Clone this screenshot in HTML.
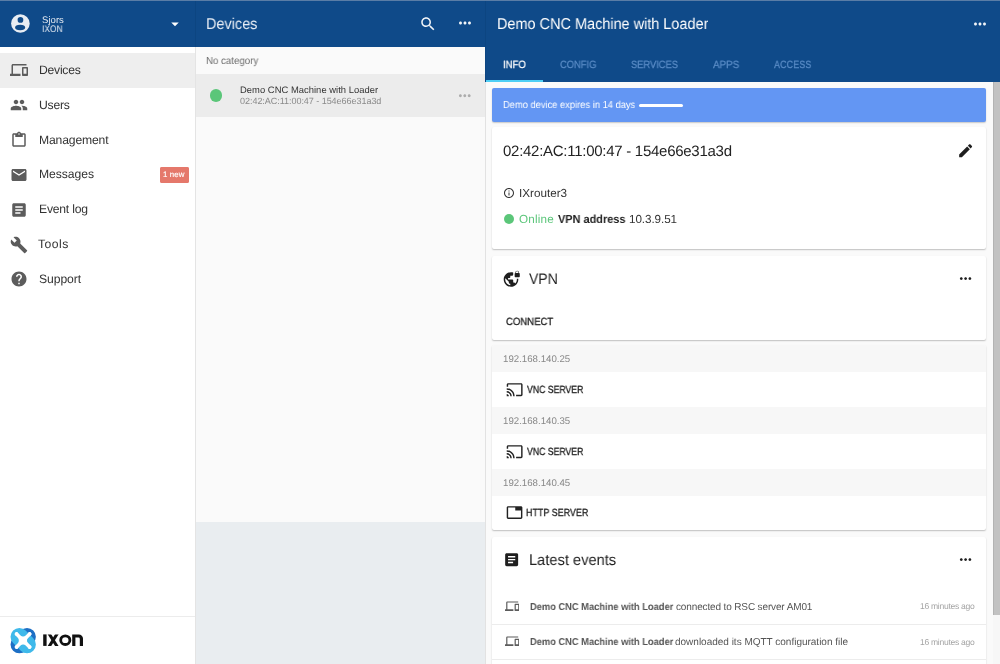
<!DOCTYPE html>
<html><head><meta charset="utf-8">
<style>
*{box-sizing:border-box;margin:0;padding:0}
html,body{width:1000px;height:664px;overflow:hidden;background:#fff;font-family:"Liberation Sans",sans-serif;color:#333}
.abs{position:absolute}
svg{display:block;position:absolute}
.t{position:absolute;white-space:nowrap;will-change:transform;text-rendering:geometricPrecision}
.card{position:absolute;left:492px;width:494px;background:#fff;box-shadow:0 1px 1.5px rgba(0,0,0,0.24);border-radius:2px}
.nv{fill:#5c5c5c}
</style></head><body>
<!-- sidebar -->
<div class="abs" style="left:0;top:0;width:195px;height:47px;background:#0f4a89"></div>
<svg style="left:11px;top:14px" width="19" height="19" viewBox="0 0 19 19">
<circle cx="9.4" cy="9.5" r="9.3" fill="#e8edf3"/>
<circle cx="9.45" cy="5.9" r="2.85" fill="#0f4a89"/>
<ellipse cx="9.1" cy="13.4" rx="5" ry="2.75" fill="#0f4a89"/>
</svg>
<svg style="left:165.75px;top:14.5px" width="18" height="18" viewBox="0 0 24 24"><path d="M7 10l5 5 5-5z" fill="#fff"/></svg>
<div class="abs" style="left:0;top:53px;width:195px;height:35px;background:#eeeeee"></div>
<svg class="nv" style="left:10px;top:61px" width="18" height="18" viewBox="0 0 24 24"><path d="M4 6h18V4H4c-1.1 0-2 .9-2 2v11H0v3h14v-3H4V6zm19 2h-6c-.55 0-1 .45-1 1v10c0 .55.45 1 1 1h6c.55 0 1-.45 1-1V9c0-.55-.45-1-1-1zm-1 9h-4v-7h4v7z"/></svg>
<svg class="nv" style="left:10px;top:96px" width="18" height="18" viewBox="0 0 24 24"><path d="M16 11c1.66 0 2.99-1.34 2.99-3S17.66 5 16 5c-1.66 0-3 1.34-3 3s1.34 3 3 3zm-8 0c1.66 0 2.99-1.34 2.99-3S9.66 5 8 5C6.34 5 5 6.34 5 8s1.34 3 3 3zm0 2c-2.33 0-7 1.17-7 3.5V19h14v-2.5c0-2.33-4.67-3.5-7-3.5zm8 0c-.29 0-.62.02-.97.05 1.16.84 1.97 1.97 1.97 3.45V19h6v-2.5c0-2.33-4.67-3.5-7-3.5z"/></svg>
<svg class="nv" style="left:10px;top:131px" width="18" height="18" viewBox="0 0 24 24"><path d="M19 3h-4.18C14.4 1.84 13.3 1 12 1c-1.3 0-2.4.84-2.82 2H5c-1.1 0-2 .9-2 2v14c0 1.1.9 2 2 2h14c1.1 0 2-.9 2-2V5c0-1.1-.9-2-2-2zm-7 0c.55 0 1 .45 1 1s-.45 1-1 1-1-.45-1-1 .45-1 1-1zm7 16H5V5h2v3h10V5h2v14z"/></svg>
<svg class="nv" style="left:10px;top:166px" width="18" height="18" viewBox="0 0 24 24"><path d="M20 4H4c-1.1 0-1.99.9-1.99 2L2 18c0 1.1.9 2 2 2h16c1.1 0 2-.9 2-2V6c0-1.1-.9-2-2-2zm0 4l-8 5-8-5V6l8 5 8-5v2z"/></svg>
<svg class="nv" style="left:10px;top:200.7px" width="18" height="18" viewBox="0 0 24 24"><path d="M19 3H5c-1.1 0-2 .9-2 2v14c0 1.1.9 2 2 2h14c1.1 0 2-.9 2-2V5c0-1.1-.9-2-2-2zm-5 14H7v-2h7v2zm3-4H7v-2h10v2zm0-4H7V7h10v2z"/></svg>
<svg class="nv" style="left:10px;top:235.5px" width="18" height="18" viewBox="0 0 24 24"><path d="M22.7 19l-9.1-9.1c.9-2.3.4-5-1.5-6.9-2-2-5-2.4-7.4-1.3L9 6 6 9 1.6 4.7C.4 7.1.9 10.1 2.9 12.1c1.9 1.9 4.6 2.4 6.9 1.5l9.1 9.1c.4.4 1 .4 1.4 0l2.3-2.3c.5-.4.5-1.1.1-1.4z"/></svg>
<svg class="nv" style="left:10px;top:270.3px" width="18" height="18" viewBox="0 0 24 24"><path d="M12 2C6.48 2 2 6.48 2 12s4.48 10 10 10 10-4.48 10-10S17.52 2 12 2zm1 17h-2v-2h2v2zm2.07-7.75l-.9.92C13.45 12.9 13 13.5 13 15h-2v-.5c0-1.1.45-2.1 1.17-2.83l1.24-1.26c.37-.36.59-.86.59-1.41 0-1.1-.9-2-2-2s-2 .9-2 2H8c0-2.21 1.79-4 4-4s4 1.79 4 4c0 .88-.36 1.68-.93 2.25z"/></svg>
<div class="abs" style="left:160px;top:167px;width:29px;height:16px;background:#e5786b;border-radius:2px"></div>
<div class="abs" style="left:0;top:616px;width:195px;height:1px;background:#ececec"></div>
<svg style="left:8px;top:626px" width="30" height="30" viewBox="0 0 30 30">
<rect x="0.95" y="5.75" width="28.5" height="17.7" rx="8.85" transform="rotate(-45 15.2 14.6)" fill="#1d6fc5"/>
<rect x="0.95" y="5.75" width="28.5" height="17.7" rx="8.85" transform="rotate(45 15.2 14.6)" fill="#3fb9ea"/>
<path fill="#fff" d="M9.86 6.58A5.43 5.43 0 0 0 20.34 6.58A1.9 1.9 0 0 1 23.02 9.26A5.43 5.43 0 0 0 23.02 19.74A1.9 1.9 0 0 1 20.34 22.42A5.46 5.46 0 0 0 9.86 22.42A1.9 1.9 0 0 1 7.18 19.74A5.6 5.6 0 0 0 7.18 9.26A1.9 1.9 0 0 1 9.86 6.58Z"/>
<path stroke="#fff" stroke-width="3.6" stroke-linecap="round" d="M8.52 7.92L21.68 21.08M21.68 7.92L8.52 21.08"/>
</svg>
<svg style="left:40px;top:630px" width="48" height="20" viewBox="0 0 48 20">
<defs><clipPath id="xc"><rect x="0" y="4.4" width="48" height="11.5"/></clipPath></defs>
<rect x="3.2" y="4.4" width="3.4" height="11.5" fill="#111"/>
<g clip-path="url(#xc)" stroke="#111" stroke-width="3"><line x1="8.9" y1="3.4" x2="17.4" y2="16.9"/><line x1="17.4" y1="3.4" x2="8.9" y2="16.9"/></g>
<ellipse cx="25.3" cy="10.15" rx="4.6" ry="4.35" fill="none" stroke="#111" stroke-width="2.8"/>
<path fill="#111" d="M32.2 15.9V4.4H38.8A4.2 4.2 0 0 1 43 8.6V15.9H39.8V8.9A1.3 1.3 0 0 0 38.5 7.6H35.4V15.9Z"/>
</svg>
<div class="abs" style="left:195px;top:47px;width:1px;height:617px;background:#e4e4e4"></div>
<!-- devices panel -->
<div class="abs" style="left:196px;top:0;width:289px;height:47px;background:#0f4a89"></div>

<svg style="left:418.5px;top:14.8px" width="18" height="18" viewBox="0 0 24 24"><path fill="#f2f5f9" d="M15.5 14h-.79l-.28-.27C15.41 12.59 16 11.11 16 9.5 16 5.91 13.09 3 9.5 3S3 5.91 3 9.5 5.91 16 9.5 16c1.61 0 3.09-.59 4.23-1.57l.27.28v.79l5 4.99L20.49 19l-4.99-5zm-6 0C7.01 14 5 11.99 5 9.5S7.01 5 9.5 5 14 7.01 14 9.5 11.99 14 9.5 14z"/></svg>
<svg style="left:456.3px;top:14.4px" width="18" height="18" viewBox="0 0 24 24"><path fill="#f2f5f9" d="M6 10c-1.1 0-2 .9-2 2s.9 2 2 2 2-.9 2-2-.9-2-2-2zm12 0c-1.1 0-2 .9-2 2s.9 2 2 2 2-.9 2-2-.9-2-2-2zm-6 0c-1.1 0-2 .9-2 2s.9 2 2 2 2-.9 2-2-.9-2-2-2z"/></svg>
<div class="abs" style="left:196px;top:47px;width:289px;height:475px;background:#fafafa"></div>
<div class="abs" style="left:196px;top:74px;width:289px;height:43px;background:#ececec"></div>
<div class="abs" style="left:210px;top:89.3px;width:12.4px;height:12.4px;border-radius:50%;background:#5bc679"></div>
<svg style="left:456.4px;top:86.6px" width="17.6" height="17.6" viewBox="0 0 24 24"><path fill="#acacac" d="M6 10c-1.1 0-2 .9-2 2s.9 2 2 2 2-.9 2-2-.9-2-2-2zm12 0c-1.1 0-2 .9-2 2s.9 2 2 2 2-.9 2-2-.9-2-2-2zm-6 0c-1.1 0-2 .9-2 2s.9 2 2 2 2-.9 2-2-.9-2-2-2z"/></svg>
<div class="abs" style="left:196px;top:522px;width:289px;height:142px;background:#e9edf0"></div>
<div class="abs" style="left:485px;top:47px;width:1px;height:617px;background:#e2e2e2"></div>
<!-- right panel -->
<div class="abs" style="left:486px;top:0;width:514px;height:82px;background:#0f4a89"></div>

<svg style="left:971px;top:14.5px" width="18" height="18" viewBox="0 0 24 24"><path fill="#f2f5f9" d="M6 10c-1.1 0-2 .9-2 2s.9 2 2 2 2-.9 2-2-.9-2-2-2zm12 0c-1.1 0-2 .9-2 2s.9 2 2 2 2-.9 2-2-.9-2-2-2zm-6 0c-1.1 0-2 .9-2 2s.9 2 2 2 2-.9 2-2-.9-2-2-2z"/></svg>
<div class="abs" style="left:486px;top:80px;width:57px;height:2px;background:#4fcff5"></div>
<div class="abs" style="left:486px;top:82px;width:507px;height:582px;background:#fafafa"></div>
<div class="abs" style="left:993px;top:82px;width:7px;height:582px;background:#f7f7f7"></div>
<div class="abs" style="left:993px;top:82px;width:7px;height:533px;background:#c2c2c2;border-left:1px solid #b3b3b3"></div>
<div class="abs" style="left:0;top:0;width:1000px;height:1px;background:#5a7da6"></div>
<div class="abs" style="left:195px;top:1px;width:1px;height:46px;background:#0c4581"></div>
<div class="abs" style="left:485px;top:1px;width:1px;height:81px;background:#0c4581"></div>
<!-- banner -->
<div class="abs" style="left:492px;top:87.5px;width:494px;height:34px;background:#6396f3;border-radius:2px;box-shadow:0 1px 1.5px rgba(0,0,0,0.2)"></div>
<div class="abs" style="left:639px;top:104px;width:44px;height:3px;background:#fff;border-radius:1.5px"></div>
<!-- card 1 -->
<div class="card" style="top:127px;height:122px"></div>
<svg style="left:956.9px;top:141.7px" width="17.3" height="17.3" viewBox="0 0 24 24"><path fill="#1e1e1e" d="M3 17.25V21h3.75L17.81 9.94l-3.75-3.75L3 17.25zM20.71 7.04c.39-.39.39-1.02 0-1.41l-2.34-2.34c-.39-.39-1.02-.39-1.41 0l-1.83 1.83 3.75 3.75 1.83-1.83z"/></svg>
<svg style="left:503px;top:187px" width="12" height="12" viewBox="0 0 24 24"><path fill="#333" d="M11 7h2v2h-2zm0 4h2v6h-2zm1-9C6.48 2 2 6.48 2 12s4.48 10 10 10 10-4.48 10-10S17.52 2 12 2zm0 18c-4.41 0-8-3.590-8-8s3.59-8 8-8 8 3.59 8 8-3.59 8-8 8z"/></svg>
<div class="abs" style="left:504px;top:214px;width:10px;height:10px;border-radius:50%;background:#5bc679"></div>
<!-- card 2 -->
<div class="card" style="top:256px;height:83.5px"></div>
<svg style="left:503.3px;top:269.5px" width="17.5" height="17.5" viewBox="0 0 24 24"><path fill="#1e1e1e" d="M22 4v-.5C22 2.12 20.88 1 19.5 1S17 2.12 17 3.5V4c-.55 0-1 .45-1 1v4c0 .55.45 1 1 1h5c.55 0 1-.45 1-1V5c0-.55-.45-1-1-1zm-.8 0h-3.4v-.5c0-.94.76-1.7 1.7-1.7s1.7.76 1.7 1.7V4zm-2.28 8c.04.33.08.66.08 1 0 2.08-.8 3.97-2.1 5.39-.26-.81-1-1.39-1.9-1.39h-1v-3c0-.55-.45-1-1-1H7v-2h2c.55 0 1-.45 1-1V8h2c1.1 0 2-.9 2-2V3.46c-.95-.3-1.95-.46-3-.46C5.48 3 1 7.48 1 13s4.48 10 10 10 10-4.48 10-10c0-.34-.02-.67-.05-1h-2.03zM10 20.93c-3.95-.49-7-3.85-7-7.93 0-.62.08-1.21.21-1.79L8 16v1c0 1.1.9 2 2 2v1.93z"/></svg>
<svg style="left:956.8px;top:269.8px" width="17.2" height="17.2" viewBox="0 0 24 24"><path fill="#1e1e1e" d="M6 10c-1.1 0-2 .9-2 2s.9 2 2 2 2-.9 2-2-.9-2-2-2zm12 0c-1.1 0-2 .9-2 2s.9 2 2 2 2-.9 2-2-.9-2-2-2zm-6 0c-1.1 0-2 .9-2 2s.9 2 2 2 2-.9 2-2-.9-2-2-2z"/></svg>
<!-- card 3 -->
<div class="card" style="top:345px;height:185px;overflow:hidden">
<div class="abs" style="left:0;top:0;width:494px;height:27px;background:#f7f7f7"></div>
<div class="abs" style="left:0;top:62px;width:494px;height:27px;background:#f7f7f7"></div>
<div class="abs" style="left:0;top:124px;width:494px;height:27px;background:#f7f7f7"></div>
</div>
<svg style="left:506.1px;top:380.8px" width="17.3" height="17.3" viewBox="0 0 24 24"><path fill="#222" d="M21 3H3c-1.1 0-2 .9-2 2v3h2V5h18v14h-7v2h7c1.1 0 2-.9 2-2V5c0-1.1-.9-2-2-2zM1 18v3h3c0-1.66-1.34-3-3-3zm0-4v2c2.76 0 5 2.24 5 5h2c0-3.87-3.13-7-7-7zm0-4v2c4.97 0 9 4.03 9 9h2c0-6.08-4.93-11-11-11z"/></svg>
<svg style="left:506.1px;top:442.8px" width="17.3" height="17.3" viewBox="0 0 24 24"><path fill="#222" d="M21 3H3c-1.1 0-2 .9-2 2v3h2V5h18v14h-7v2h7c1.1 0 2-.9 2-2V5c0-1.1-.9-2-2-2zM1 18v3h3c0-1.66-1.34-3-3-3zm0-4v2c2.76 0 5 2.24 5 5h2c0-3.87-3.13-7-7-7zm0-4v2c4.97 0 9 4.03 9 9h2c0-6.080-4.93-11-11-11z"/></svg>
<svg style="left:506.3px;top:503.8px" width="17.1" height="17.1" viewBox="0 0 24 24"><path fill="#222" d="M21 3H3c-1.1 0-2 .9-2 2v14c0 1.1.9 2 2 2h18c1.1 0 2-.9 2-2V5c0-1.1-.9-2-2-2zm0 16H3V5h10v4h8v10z"/></svg>
<!-- card 4 -->
<div class="card" style="top:537px;height:140px"></div>
<svg style="left:503px;top:550.9px" width="17.3" height="17.3" viewBox="0 0 24 24"><path fill="#1e1e1e" d="M19 3H5c-1.1 0-2 .9-2 2v14c0 1.1.9 2 2 2h14c1.1 0 2-.9 2-2V5c0-1.1-.9-2-2-2zm-5 14H7v-2h7v2zm3-4H7v-2h10v2zm0-4H7V7h10v2z"/></svg>
<svg style="left:956.9px;top:551px" width="17.2" height="17.2" viewBox="0 0 24 24"><path fill="#1e1e1e" d="M6 10c-1.1 0-2 .9-2 2s.9 2 2 2 2-.9 2-2-.9-2-2-2zm12 0c-1.1 0-2 .9-2 2s.9 2 2 2 2-.9 2-2-.9-2-2-2zm-6 0c-1.1 0-2 .9-2 2s.9 2 2 2 2-.9 2-2-.9-2-2-2z"/></svg>
<svg class="nv" style="left:504.5px;top:598.9px" width="14.4" height="14.4" viewBox="0 0 24 24"><path d="M4 6h18V4H4c-1.1 0-2 .9-2 2v11H0v3h14v-3H4V6zm19 2h-6c-.55 0-1 .45-1 1v10c0 .55.45 1 1 1h6c.55 0 1-.45 1-1V9c0-.55-.45-1-1-1zm-1 9h-4v-7h4v7z"/></svg>
<div class="abs" style="left:492px;top:624px;width:494px;height:1px;background:#ececec"></div>
<svg class="nv" style="left:504.5px;top:633.9px" width="14.4" height="14.4" viewBox="0 0 24 24"><path d="M4 6h18V4H4c-1.1 0-2 .9-2 2v11H0v3h14v-3H4V6zm19 2h-6c-.55 0-1 .45-1 1v10c0 .55.45 1 1 1h6c.55 0 1-.45 1-1V9c0-.55-.45-1-1-1zm-1 9h-4v-7h4v7z"/></svg>
<div class="abs" style="left:492px;top:659px;width:494px;height:1px;background:#ececec"></div>
<div class="abs" style="left:160px;top:167px;width:29px;height:16px;background:#e5786b;border-radius:2px"></div>
<div class="t" style="left:41.81px;top:15.82px;font-size:9.54px;line-height:9.54px;letter-spacing:0.041px;color:#e3e9f1;">Sjors</div>
<div class="t" style="left:42.03px;top:24.7px;font-size:9.54px;line-height:9.54px;letter-spacing:0px;color:#e3e9f1;transform:scaleX(0.8807);transform-origin:0 0;">IXON</div>
<div class="t" style="left:38.58px;top:64.0px;font-size:12.16px;line-height:12.16px;letter-spacing:-0.243px;color:#333;">Devices</div>
<div class="t" style="left:38.7px;top:98.61px;font-size:12.16px;line-height:12.16px;letter-spacing:-0.24px;color:#333;">Users</div>
<div class="t" style="left:38.71px;top:133.64px;font-size:12.16px;line-height:12.16px;letter-spacing:-0.151px;color:#333;">Management</div>
<div class="t" style="left:38.71px;top:168.44px;font-size:12.16px;line-height:12.16px;letter-spacing:-0.06px;color:#333;">Messages</div>
<div class="t" style="left:38.68px;top:203.0px;font-size:12.16px;line-height:12.16px;letter-spacing:-0.212px;color:#333;">Event log</div>
<div class="t" style="left:38.12px;top:237.91px;font-size:12.16px;line-height:12.16px;letter-spacing:0.46px;color:#333;">Tools</div>
<div class="t" style="left:38.79px;top:272.52px;font-size:12.16px;line-height:12.16px;letter-spacing:-0.084px;color:#333;">Support</div>
<div class="t" style="left:163.34px;top:170.79px;font-size:7.86px;line-height:7.86px;letter-spacing:0.122px;color:#fff;-webkit-text-stroke:0.15px #fff;">1 new</div>
<div class="t" style="left:206.19px;top:16.9px;font-size:15.66px;line-height:15.66px;letter-spacing:0px;color:#e6ecf4;transform:scaleX(0.9235);transform-origin:0 0;">Devices</div>
<div class="t" style="left:206.05px;top:56.84px;font-size:10.37px;line-height:10.37px;letter-spacing:0px;color:#6b6b6b;transform:scaleX(0.9344);transform-origin:0 0;">No category</div>
<div class="t" style="left:239.63px;top:86.2px;font-size:9.38px;line-height:9.38px;letter-spacing:0.042px;color:#333;">Demo CNC Machine with Loader</div>
<div class="t" style="left:239.92px;top:97.05px;font-size:9.02px;line-height:9.02px;letter-spacing:-0.043px;color:#8a8a8a;">02:42:AC:11:00:47 - 154e66e31a3d</div>
<div class="t" style="left:497.04px;top:16.8px;font-size:15.66px;line-height:15.66px;letter-spacing:0px;color:#fff;transform:scaleX(0.9235);transform-origin:0 0;">Demo CNC Machine with Loader</div>
<div class="t" style="left:503.0px;top:59.86px;font-size:10.53px;line-height:10.53px;letter-spacing:0px;color:#fff;-webkit-text-stroke:0.25px #fff;transform:scaleX(0.9057);transform-origin:0 0;">INFO</div>
<div class="t" style="left:560.33px;top:59.86px;font-size:10.53px;line-height:10.53px;letter-spacing:0px;color:#5a8cc6;-webkit-text-stroke:0.25px #5a8cc6;transform:scaleX(0.8899);transform-origin:0 0;">CONFIG</div>
<div class="t" style="left:631.3px;top:59.86px;font-size:10.53px;line-height:10.53px;letter-spacing:0px;color:#5a8cc6;-webkit-text-stroke:0.25px #5a8cc6;transform:scaleX(0.8862);transform-origin:0 0;">SERVICES</div>
<div class="t" style="left:712.66px;top:59.92px;font-size:10.53px;line-height:10.53px;letter-spacing:0px;color:#5a8cc6;-webkit-text-stroke:0.25px #5a8cc6;transform:scaleX(0.9361);transform-origin:0 0;">APPS</div>
<div class="t" style="left:773.87px;top:59.86px;font-size:10.53px;line-height:10.53px;letter-spacing:0px;color:#5a8cc6;-webkit-text-stroke:0.25px #5a8cc6;transform:scaleX(0.8626);transform-origin:0 0;">ACCESS</div>
<div class="t" style="left:502.77px;top:101.0px;font-size:10.17px;line-height:10.17px;letter-spacing:0px;color:#fff;transform:scaleX(0.9186);transform-origin:0 0;">Demo device expires in 14 days</div>
<div class="t" style="left:502.85px;top:143.73px;font-size:15.0px;line-height:15.0px;letter-spacing:-0.272px;color:#222;">02:42:AC:11:00:47 - 154e66e31a3d</div>
<div class="t" style="left:518.73px;top:188.0px;font-size:11.68px;line-height:11.68px;letter-spacing:0.012px;color:#333;">IXrouter3</div>
<div class="t" style="left:518.86px;top:214.24px;font-size:11.68px;line-height:11.68px;letter-spacing:0.192px;color:#5cc67b;">Online</div>
<div class="t" style="left:557.88px;top:214.03px;font-size:11.68px;line-height:11.68px;letter-spacing:0px;color:#222;font-weight:bold;transform:scaleX(0.9369);transform-origin:0 0;">VPN address</div>
<div class="t" style="left:629.34px;top:214.0px;font-size:11.68px;line-height:11.68px;letter-spacing:-0.077px;color:#333;">10.3.9.51</div>
<div class="t" style="left:529.34px;top:271.5px;font-size:15.18px;line-height:15.18px;letter-spacing:0px;color:#222;transform:scaleX(0.9241);transform-origin:0 0;">VPN</div>
<div class="t" style="left:505.94px;top:317.51px;font-size:10.41px;line-height:10.41px;letter-spacing:0px;color:#222;-webkit-text-stroke:0.3px #222;transform:scaleX(0.9185);transform-origin:0 0;">CONNECT</div>
<div class="t" style="left:503.09px;top:354.8px;font-size:9.66px;line-height:9.66px;letter-spacing:0.006px;color:#888;">192.168.140.25</div>
<div class="t" style="left:526.59px;top:385.8px;font-size:10.41px;line-height:10.41px;letter-spacing:0px;color:#222;-webkit-text-stroke:0.3px #222;transform:scaleX(0.836);transform-origin:0 0;">VNC SERVER</div>
<div class="t" style="left:503.09px;top:416.8px;font-size:9.66px;line-height:9.66px;letter-spacing:0.006px;color:#888;">192.168.140.35</div>
<div class="t" style="left:526.59px;top:447.8px;font-size:10.41px;line-height:10.41px;letter-spacing:0px;color:#222;-webkit-text-stroke:0.3px #222;transform:scaleX(0.836);transform-origin:0 0;">VNC SERVER</div>
<div class="t" style="left:503.09px;top:478.8px;font-size:9.66px;line-height:9.66px;letter-spacing:0.006px;color:#888;">192.168.140.45</div>
<div class="t" style="left:526.11px;top:508.98px;font-size:10.41px;line-height:10.41px;letter-spacing:0px;color:#222;-webkit-text-stroke:0.3px #222;transform:scaleX(0.8608);transform-origin:0 0;">HTTP SERVER</div>
<div class="t" style="left:529.04px;top:553.2px;font-size:15.51px;line-height:15.51px;letter-spacing:0px;color:#222;transform:scaleX(0.9442);transform-origin:0 0;">Latest events</div>
<div class="t" style="left:529.88px;top:602.76px;font-size:10.02px;line-height:10.02px;letter-spacing:0px;color:#555;font-weight:bold;transform:scaleX(0.9298);transform-origin:0 0;">Demo CNC Machine with Loader</div>
<div class="t" style="left:675.54px;top:602.91px;font-size:10.02px;line-height:10.02px;letter-spacing:-0.145px;color:#555;">connected to RSC server AM01</div>
<div class="t" style="left:529.88px;top:637.76px;font-size:10.02px;line-height:10.02px;letter-spacing:0px;color:#555;font-weight:bold;transform:scaleX(0.9298);transform-origin:0 0;">Demo CNC Machine with Loader</div>
<div class="t" style="left:675.48px;top:637.91px;font-size:10.02px;line-height:10.02px;letter-spacing:-0.014px;color:#555;">downloaded its MQTT configuration file</div>
<div class="t" style="left:919.78px;top:602.3px;font-size:8.55px;line-height:8.55px;letter-spacing:-0.288px;color:#a4a4a4;">16 minutes ago</div>
<div class="t" style="left:919.78px;top:638.0px;font-size:8.55px;line-height:8.55px;letter-spacing:-0.288px;color:#a4a4a4;">16 minutes ago</div>
</body></html>
